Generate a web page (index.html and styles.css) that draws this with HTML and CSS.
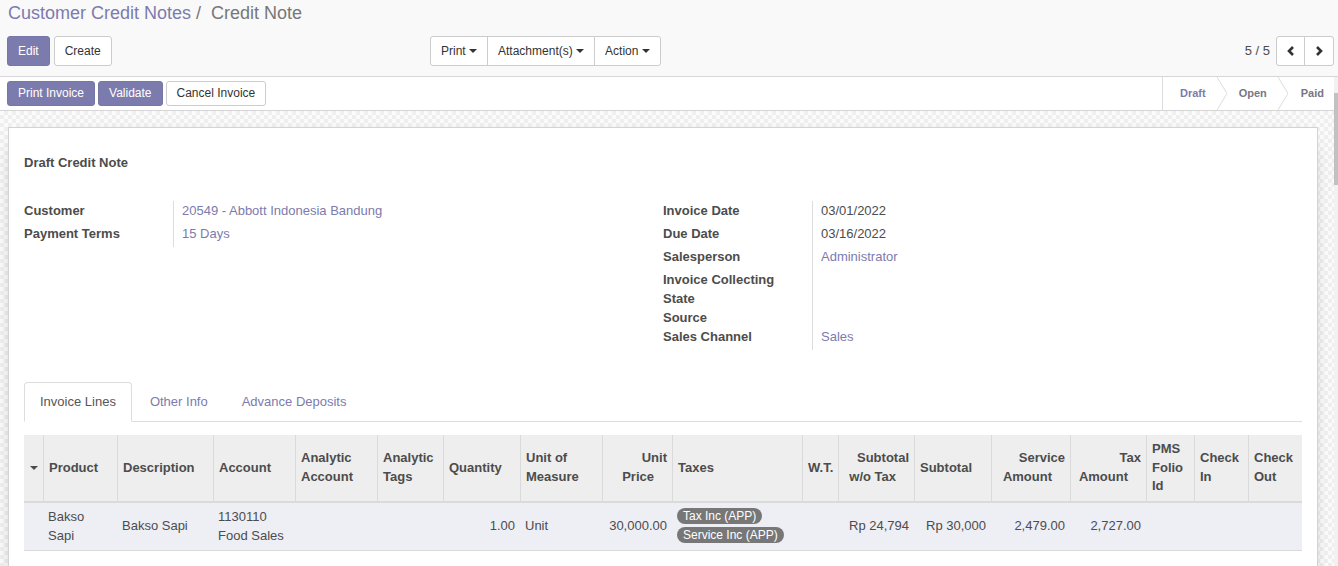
FILE: index.html
```html
<!DOCTYPE html>
<html lang="en">
<head>
<meta charset="utf-8">
<title>Credit Note</title>
<link rel="stylesheet" href="styles.css">
</head>
<body>
<div class="app">
  <div class="cp">
    <ol class="breadcrumb">
      <li><a href="#">Customer Credit Notes</a></li>
      <li class="active"><span class="sep">/&nbsp;</span>Credit Note</li>
    </ol>
    <div class="cp-row">
      <div class="cp-left">
        <button class="btn btn-primary">Edit</button>
        <button class="btn btn-default">Create</button>
      </div>
      <div class="btn-group">
        <button class="btn btn-default">Print <span class="caret"></span></button>
        <button class="btn btn-default">Attachment(s) <span class="caret"></span></button>
        <button class="btn btn-default">Action <span class="caret"></span></button>
      </div>
      <div class="pager">
        <span class="pager-value">5 / 5</span>
        <div class="pager-btns">
          <button class="btn btn-default pbtn"><svg width="8" height="10" viewBox="0 0 8 10"><polyline points="6,1 2,5 6,9" fill="none" stroke="#333" stroke-width="2.6"/></svg></button>
          <button class="btn btn-default pbtn"><svg width="8" height="10" viewBox="0 0 8 10"><polyline points="2,1 6,5 2,9" fill="none" stroke="#333" stroke-width="2.6"/></svg></button>
        </div>
      </div>
    </div>
  </div>
  <div class="content">
    <div class="scroller">
      <div class="statusbar">
        <div class="sb-buttons">
          <button class="btn btn-primary btn-sb">Print Invoice</button>
          <button class="btn btn-primary btn-sb">Validate</button>
          <button class="btn btn-default btn-sb">Cancel Invoice</button>
        </div>
        <div class="stages">
          <span class="stage current s1">Draft</span>
          <svg class="chev" width="10" height="33" viewBox="0 0 10 33"><polyline points="0,0 10,16.5 0,33" fill="none" stroke="#dcdcdc" stroke-width="1"/></svg>
          <span class="stage s2">Open</span>
          <svg class="chev" width="10" height="33" viewBox="0 0 10 33"><polyline points="0,0 10,16.5 0,33" fill="none" stroke="#dcdcdc" stroke-width="1"/></svg>
          <span class="stage s3">Paid</span>
        </div>
      </div>
      <div class="sheet-bg">
        <div class="sheet">
          <div class="title">Draft Credit Note</div>
          <div class="groups">
            <div class="group">
              <div class="frow v"><div class="flabel">Customer</div><div class="fval link">20549 - Abbott Indonesia Bandung</div></div>
              <div class="frow v"><div class="flabel">Payment Terms</div><div class="fval link">15 Days</div></div>
            </div>
            <div class="group">
              <div class="frow v"><div class="flabel">Invoice Date</div><div class="fval">03/01/2022</div></div>
              <div class="frow v"><div class="flabel">Due Date</div><div class="fval">03/16/2022</div></div>
              <div class="frow v"><div class="flabel">Salesperson</div><div class="fval link">Administrator</div></div>
              <div class="frow"><div class="flabel">Invoice Collecting State</div><div class="fval"></div></div>
              <div class="frow"><div class="flabel">Source</div><div class="fval"></div></div>
              <div class="frow v"><div class="flabel">Sales Channel</div><div class="fval link">Sales</div></div>
            </div>
          </div>
          <div class="notebook">
            <ul class="tabs">
              <li class="tab active"><a href="#">Invoice Lines</a></li>
              <li class="tab"><a href="#">Other Info</a></li>
              <li class="tab"><a href="#">Advance Deposits</a></li>
            </ul>
          </div>
          <table class="list">
            <colgroup>
              <col style="width:19px"><col style="width:74px"><col style="width:96px"><col style="width:82px">
              <col style="width:82px"><col style="width:66px"><col style="width:77px"><col style="width:82px">
              <col style="width:70px"><col style="width:130px"><col style="width:36px"><col style="width:76px">
              <col style="width:77px"><col style="width:79px"><col style="width:76px"><col style="width:48px">
              <col style="width:54px"><col style="width:54px">
            </colgroup>
            <thead>
              <tr>
                <th class="handle"><span class="hcaret"></span></th>
                <th>Product</th>
                <th>Description</th>
                <th>Account</th>
                <th>Analytic Account</th>
                <th>Analytic Tags</th>
                <th>Quantity</th>
                <th>Unit of Measure</th>
                <th class="r">Unit Price<span class="sp"></span></th>
                <th>Taxes</th>
                <th class="nw">W.T.</th>
                <th class="r">Subtotal w/o Tax<span class="sp"></span></th>
                <th>Subtotal</th>
                <th class="r">Service Amount<span class="sp"></span></th>
                <th class="r">Tax Amount<span class="sp"></span></th>
                <th>PMS Folio Id</th>
                <th>Check In</th>
                <th>Check Out</th>
              </tr>
            </thead>
            <tbody>
              <tr>
                <td></td>
                <td>Bakso Sapi</td>
                <td>Bakso Sapi</td>
                <td>1130110 Food Sales</td>
                <td></td>
                <td></td>
                <td class="r">1.00</td>
                <td>Unit</td>
                <td class="r">30,000.00</td>
                <td><div class="tags"><span class="badge">Tax Inc (APP)</span><span class="badge">Service Inc (APP)</span></div></td>
                <td></td>
                <td class="r">Rp 24,794</td>
                <td class="r">Rp 30,000</td>
                <td class="r">2,479.00</td>
                <td class="r">2,727.00</td>
                <td></td>
                <td></td>
                <td></td>
              </tr>
            </tbody>
          </table>
        </div>
      </div>
    </div>
    <div class="vscroll"><div class="thumb"></div></div>
  </div>
</div>
</body>
</html>
```
FILE: styles.css
```css
* { box-sizing: border-box; }
html, body { margin: 0; padding: 0; }
body {
  font-family: "Liberation Sans", Arial, sans-serif;
  font-size: 13px;
  line-height: 1.42857;
  color: #4c4c4c;
  background: #fff;
  overflow: hidden;
}
.app { height: 566px; display: flex; flex-direction: column; }

/* control panel */
.cp {
  background: #f9f9f9;
  border-bottom: 1px solid #d6d6d6;
  padding: 0 4px 10px 7px;
  flex: none;
}
.breadcrumb {
  display: flex;
  list-style: none;
  margin: 0;
  padding: 0 0 0 1px;
  font-size: 18px;
  line-height: 26px;
}
.breadcrumb a { color: #7c7bad; text-decoration: none; }
.breadcrumb .active { color: #777; }
.breadcrumb .sep { padding: 0 5px; color: #777; }
.cp-row { display: flex; align-items: center; margin-top: 10px; height: 30px; }
.cp-left { width: 423px; display: flex; gap: 4px; }

.btn {
  font-family: inherit;
  font-size: 12px;
  line-height: 18px;
  padding: 5px 10px;
  border: 1px solid transparent;
  border-radius: 3px;
  cursor: pointer;
  white-space: nowrap;
}
.btn-primary { background: #7c7bad; border-color: #7776a9; color: #fff; }
.btn-default { background: #fff; border-color: #ccc; color: #333; }
.btn-group { display: flex; }
.btn-group .btn { border-radius: 0; margin-left: -1px; }
.btn-group .btn:first-child { border-radius: 3px 0 0 3px; margin-left: 0; }
.btn-group .btn:last-child { border-radius: 0 3px 3px 0; }
.caret {
  display: inline-block;
  width: 0; height: 0;
  border-top: 4px solid #333;
  border-left: 4px solid transparent;
  border-right: 4px solid transparent;
  vertical-align: middle;
  margin-top: -2px;
}
.pager { margin-left: auto; display: flex; align-items: center; }
.pager-value { font-size: 13px; margin-right: 6px; }
.pager-btns { display: flex; }
.pbtn { width: 29px; height: 30px; padding: 0; display: flex; align-items: center; justify-content: center; }
.pager-btns .pbtn:first-child { border-radius: 3px 0 0 3px; }
.pager-btns .pbtn:last-child { border-radius: 0 3px 3px 0; margin-left: -1px; width: 30px; }

/* content */
.content { flex: 1; display: flex; min-height: 0; }
.scroller { flex: 1; min-width: 0; overflow: hidden; }
.vscroll { width: 4px; background: #f1f1f1; flex: none; }
.thumb { margin-top: 16px; height: 92px; background: #c1c1c1; }

.statusbar {
  display: flex;
  height: 34px;
  background: #fff;
  border-bottom: 1px solid #d6d6d6;
  padding-left: 7px;
}
.sb-buttons { display: flex; align-items: flex-start; padding-top: 4px; gap: 3px; }
.btn-sb { padding: 2px 10px 3px; line-height: 18px; }
.stages { margin-left: auto; display: flex; align-items: center; border-left: 1px solid #dcdcdc; height: 33px; }
.stage { font-size: 11px; font-weight: bold; color: #777782; }
.stage.current { color: #7c7bad; }
.s1 { padding: 0 11px 0 17px; }
.s2 { padding: 0 11px 0 12px; }
.s3 { padding: 0 10px 0 13px; }
.chev { display: block; flex: none; }

.sheet-bg {
  padding: 16px 16px 0 8px;
  background-color: #f7f7f7;
  background-image: repeating-conic-gradient(#efefef 0 25%, #fbfbfb 0 50%);
  background-size: 8px 8px;
  height: 100%;
}
.sheet {
  background: #fff;
  border: 1px solid #d3d3d3;
  box-shadow: 0 5px 20px -15px #000;
  padding: 16px 15px 40px;
  min-height: 480px;
}
.title { font-size: 13px; font-weight: bold; line-height: 17px; margin-top: 10px; }

.groups { display: flex; margin-top: 30px; }
.group { width: 50%; }
.frow { display: flex; line-height: 19px; }
.frow.v > * { padding-bottom: 4px; }
.flabel {
  width: 150px;
  flex: none;
  font-weight: bold;
  padding-right: 15px;
  border-right: 1px solid #dcdcdc;
}
.fval { padding-left: 8px; }
.link { color: #7c7bad; }

.notebook { margin-top: 32px; }
.tabs {
  list-style: none;
  margin: 0;
  padding: 0;
  display: flex;
  border-bottom: 1px solid #ddd;
}
.tab { margin-bottom: -1px; margin-right: 2px; }
.tab a {
  display: block;
  padding: 10px 15px;
  line-height: 18px;
  border: 1px solid transparent;
  border-radius: 4px 4px 0 0;
  color: #7c7bad;
  text-decoration: none;
}
.tab.active a { color: #555; background: #fff; border-color: #ddd #ddd transparent; }

.list {
  width: 100%;
  table-layout: fixed;
  border-collapse: separate;
  border-spacing: 0;
  margin-top: 13px;
}
.list th {
  background: #eee;
  font-weight: bold;
  text-align: left;
  padding: 5px;
  line-height: 18.5px;
  vertical-align: middle;
  border-left: 1px solid #dadada;
  border-bottom: 2px solid #dadada;
}
.list th.handle { border-left: none; text-align: center; padding: 0; }
.list th.r { text-align: right; }
.list th.nw { white-space: nowrap; }
.sp { display: inline-block; width: 13px; }
.hcaret {
  display: inline-block;
  width: 0; height: 0;
  border-top: 4px solid #4c4c4c;
  border-left: 4px solid transparent;
  border-right: 4px solid transparent;
  vertical-align: middle;
}
.list td {
  background: #eeeef5;
  padding: 4px 5px 5px;
  line-height: 19px;
  vertical-align: middle;
  border-bottom: 1px solid #dadada;
}
.list td.r { text-align: right; }
.tags { display: flex; flex-direction: column; align-items: flex-start; gap: 3px; }
.badge {
  display: inline-block;
  background: #777;
  color: #fff;
  font-size: 12px;
  line-height: 16px;
  padding: 0 6px;
  border-radius: 8px;
}
```
